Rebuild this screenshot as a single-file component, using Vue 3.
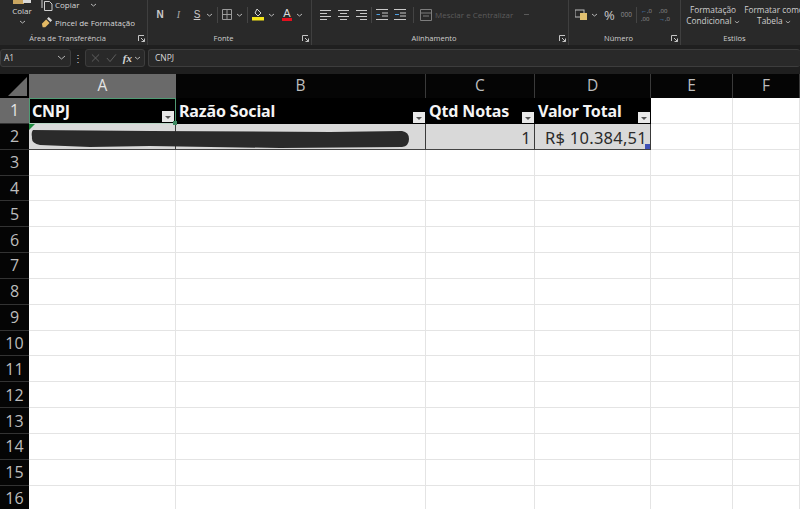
<template>
  <div class="excel">
    <div class="ribbon">
      <section class="group clip">
        <div class="tools">
          <div class="paste">
            <svg class="paste-icon" width="18" height="4" viewBox="0 0 18 4"><rect width="11" height="4" fill="#c9a560"/><rect x="10" width="8" height="3" fill="#d9d9d9"/></svg>
            <span>Colar</span>
            <svg class="chev" width="7" height="4" viewBox="0 0 7 4"><path d="M1 1l2.500 2L6 1" /></svg>
          </div>
          <div class="clip-actions">
            <div class="clip-row">
              <svg width="12" height="13" viewBox="0 0 12 13" fill="none" stroke="#cfcfcf"><path d="M3.500 3.500h5l2.500 2.500v6.500h-7.500zM1 10V.5h6"/></svg>
              <span>Copiar</span>
              <svg class="chev copy-chev" width="7" height="4" viewBox="0 0 7 4"><path d="M1 1l2.500 2L6 1" /></svg>
            </div>
            <div class="clip-row">
              <svg width="12" height="13" viewBox="0 0 14 13"><path d="M1 8l5-5 4 4-5 5H2z" fill="#e3b964"/><path d="M7 2l2-2 4 4-2 2z" fill="#d8d8d8"/></svg>
              <span>Pincel de Formatação</span>
            </div>
          </div>
        </div>
        <div class="label">Área de Transferência<svg class="launch" width="7" height="7" viewBox="0 0 7 7" fill="none" stroke="#c4c4c4"><path d="M.5 6V.5H6M3 3l3.500 3.500M6.500 3.500v3h-3"/></svg></div>
      </section>

      <section class="group font">
        <div class="tools font-tools">
          <b class="btn-n">N</b>
          <i class="btn-i">I</i>
          <u class="btn-s">S</u>
          <svg class="chev" width="7" height="4" viewBox="0 0 7 4"><path d="M1 1l2.500 2L6 1" /></svg>
          <span class="vsep"></span>
          <svg width="10" height="11" viewBox="0 0 10 11" fill="none" stroke="#9a9a9a"><path d="M.5.5h9v10h-9zM5 .5v10M.5 5.500h9"/></svg>
          <svg class="chev" width="7" height="4" viewBox="0 0 7 4"><path d="M1 1l2.500 2L6 1" /></svg>
          <span class="vsep"></span>
          <svg width="12" height="13" viewBox="0 0 12 13"><path d="M5 1l4 4-3 3-3-3z" fill="none" stroke="#d0d0d0"/><rect y="9" width="12" height="3.500" fill="#f5e61a"/></svg>
          <svg class="chev" width="7" height="4" viewBox="0 0 7 4"><path d="M1 1l2.500 2L6 1" /></svg>
          <span class="color-a">A</span>
          <svg class="chev" width="7" height="4" viewBox="0 0 7 4"><path d="M1 1l2.500 2L6 1" /></svg>
        </div>
        <div class="label">Fonte<svg class="launch" width="7" height="7" viewBox="0 0 7 7" fill="none" stroke="#c4c4c4"><path d="M.5 6V.5H6M3 3l3.500 3.500M6.500 3.500v3h-3"/></svg></div>
      </section>

      <section class="group align">
        <div class="tools align-tools">
          <svg v-for="p in alignIcons" :key="p" class="al" width="11" height="11" viewBox="0 0 11 11" fill="none" stroke="#c8c8c8"><path :d="p"/></svg>
          <span class="vsep"></span>
          <svg class="ind" width="12" height="11" viewBox="0 0 12 11" fill="none" stroke="#c8c8c8"><path d="M0 .5h12M6 4h6M6 7h6M0 10.500h12"/><path d="M4 5.500H.5" stroke="#4f9fe0"/></svg>
          <svg class="ind" width="12" height="11" viewBox="0 0 12 11" fill="none" stroke="#c8c8c8"><path d="M0 .5h12M6 4h6M6 7h6M0 10.500h12"/><path d="M1 5.500h4" stroke="#4f9fe0"/></svg>
          <span class="vsep"></span>
          <svg class="merge-icon" width="12" height="12" viewBox="0 0 12 12" fill="none" stroke="#7d7d7d"><path d="M.5.5h11v11H.5zM.5 4h11M3 7h6"/></svg>
          <span class="merge">Mesclar e Centralizar</span>
          <span class="merge-chev"></span>
        </div>
        <div class="label">Alinhamento<svg class="launch" width="7" height="7" viewBox="0 0 7 7" fill="none" stroke="#c4c4c4"><path d="M.5 6V.5H6M3 3l3.500 3.500M6.500 3.500v3h-3"/></svg></div>
      </section>

      <section class="group number">
        <div class="tools num-tools">
          <svg width="12" height="11" viewBox="0 0 12 11"><rect width="9" height="7" y="1" fill="none" stroke="#bdbdbd"/><rect x="5" y="4" width="7" height="7" fill="#e0c070"/></svg>
          <svg class="chev" width="7" height="4" viewBox="0 0 7 4"><path d="M1 1l2.500 2L6 1" /></svg>
          <span class="percent">%</span>
          <span class="thousand">000</span>
          <span class="vsep"></span>
          <div class="dec"><span><em>←</em>,0</span><span>,00</span></div>
          <div class="dec"><span>,00</span><span><em>→</em>,0</span></div>
        </div>
        <div class="label">Número<svg class="launch" width="7" height="7" viewBox="0 0 7 7" fill="none" stroke="#c4c4c4"><path d="M.5 6V.5H6M3 3l3.500 3.500M6.500 3.500v3h-3"/></svg></div>
      </section>

      <section class="group styles">
        <div class="tools style-tools">
          <div class="style-btn">
            <span>Formatação</span>
            <span>Condicional <svg class="chev" width="6" height="4" viewBox="0 0 7 4"><path d="M1 1l2.500 2L6 1" /></svg></span>
          </div>
          <div class="style-btn">
            <svg class="style-dot" width="8" height="2" viewBox="0 0 8 2"><rect width="8" height="2" fill="#3d8fd6"/></svg>
            <span>Formatar como</span>
            <span>Tabela <svg class="chev" width="6" height="4" viewBox="0 0 7 4"><path d="M1 1l2.500 2L6 1" /></svg></span>
          </div>
        </div>
        <div class="label">Estilos</div>
      </section>
    </div>

    <div class="formula">
      <div class="namebox">A1<svg class="chev big" width="9" height="5" viewBox="0 0 9 5"><path d="M1 1l3.500 3L8 1" /></svg></div>
      <span class="dots">⋮</span>
      <div class="fx-box">
        <svg width="10" height="10" viewBox="0 0 10 10" fill="none" stroke="#5f5f5f" stroke-width="1.100"><path d="M1 1l8 8M9 1L1 9"/></svg>
        <svg width="12" height="10" viewBox="0 0 12 10" fill="none" stroke="#5f5f5f" stroke-width="1.100"><path d="M1 5l3.500 4L11 1"/></svg>
        <span class="fx">fx</span>
        <svg class="chev" width="7" height="4" viewBox="0 0 7 4"><path d="M1 1l2.500 2L6 1" /></svg>
      </div>
      <div class="input">CNPJ</div>
    </div>

    <div class="sheet">
      <div class="corner"><span></span></div>
      <div v-for="c in columns" :key="c" class="col-head" :class="{ active: c === 'A' }">{{ c }}</div>

      <template v-for="r in rows" :key="r">
        <div class="row-head" :class="{ active: r === 1 }">{{ r }}</div>
        <template v-if="r === 1">
          <div v-for="(t, i) in titles" :key="t" class="cell title" :class="{ selected: i === 0 }">
            {{ t }}<span class="filter"></span>
          </div>
          <div class="cell"></div>
          <div class="cell"></div>
        </template>
        <template v-else-if="r === 2">
          <div class="cell data first">
            <svg class="scribble" width="380" height="18" viewBox="0 0 380 18"><path d="M3 0 L120 1 L300 2 L372 1 Q379 2 379 9 Q379 16 372 17 L250 18 L120 16 L60 17 L10 15 Q1 13 2 7 Q1 2 3 0z" fill="#2a2a2a"/></svg>
          </div>
          <div class="cell data"></div>
          <div class="cell data num">1</div>
          <div class="cell data num last">R$ 10.384,51</div>
          <div class="cell"></div>
          <div class="cell"></div>
        </template>
        <template v-else>
          <div v-for="c in columns" :key="c" class="cell"></div>
        </template>
      </template>
    </div>
  </div>
</template>

<script setup>
const columns = ['A', 'B', 'C', 'D', 'E', 'F']
const titles = ['CNPJ', 'Razão Social', 'Qtd Notas', 'Valor Total']
const rows = Array.from({ length: 16 }, (_, i) => i + 1)
const alignIcons = [
  'M0 1.500h11M0 4.500h7M0 7.500h11M0 10.500h7',
  'M0 1.500h11M2 4.500h7M0 7.500h11M2 10.500h7',
  'M0 1.500h11M4 4.500h7M0 7.500h11M4 10.500h7'
]
</script>

<style>
html,
body {
  margin: 0;
  background: #fff;
}
</style>

<style scoped>
.excel {
  width: 800px;
  height: 509px;
  overflow: hidden;
  font-family: "Open Sans", "Liberation Sans", sans-serif;
  background: #1f1f1f;
}

.ribbon {
  display: flex;
  height: 45px;
  background: #292929;
  color: #d8d8d8;
  font-size: 8px;
  overflow: hidden;
}

.group {
  position: relative;
  display: flex;
  flex-direction: column;
  flex: none;
  border-right: 1px solid #3f3f3f;
  box-sizing: border-box;
}

.clip { width: 148px; }
.font { width: 164px; }
.align { width: 257px; }
.number { width: 112px; }
.styles { width: 119px; border-right: 0; }

.tools {
  display: flex;
  align-items: center;
  height: 32px;
  padding-bottom: 3px;
  box-sizing: border-box;
  flex: none;
}

.label {
  position: relative;
  padding-right: 12px;
  text-align: center;
  font-size: 7.5px;
  line-height: 12px;
  color: #cfcfcf;
}

.launch {
  position: absolute;
  right: 2px;
  top: 3px;
}

.chev {
  flex: none;
  fill: none;
  stroke: #b5b5b5;
}

.paste {
  display: flex;
  flex-direction: column;
  align-items: center;
  flex: none;
  align-self: flex-start;
  width: 40px;
  margin-left: 2px;
  font-size: 8px;
  line-height: 14px;
}

.paste-icon {
  display: block;
}

.paste .chev {
  margin-top: 2px;
}

.clip-actions {
  display: flex;
  flex-direction: column;
  align-self: flex-start;
  gap: 5px;
  margin: -2px 0 0 -1px;
}

.clip-row {
  display: flex;
  align-items: center;
  gap: 2px;
  height: 13px;
  white-space: nowrap;
}

.copy-chev {
  margin-left: 9px;
}

.font-tools {
  padding-left: 7px;
  gap: 4px;
}

.btn-n,
.btn-i,
.btn-s {
  width: 10px;
  font-size: 10px;
  text-align: center;
  color: #c9c9c9;
  font-family: "Liberation Sans", sans-serif;
}

.btn-n,
.btn-i {
  margin-right: 4.500px;
}

.btn-i {
  font-family: "Liberation Serif", serif;
  color: #a8a8a8;
}

.vsep {
  width: 1px;
  height: 16px;
  background: #444;
  flex: none;
}

.color-a {
  width: 10px;
  margin-left: 3px;
  text-align: center;
  font-size: 11px;
  line-height: 10px;
  color: #d8d8d8;
  border-bottom: 3px solid #e3101e;
  font-family: "Liberation Sans", sans-serif;
}

.align-tools {
  padding-left: 8px;
}

.al {
  margin-right: 7px;
}

.al:nth-child(3) {
  margin-right: 4px;
}

.ind {
  margin-left: 4px;
}

.ind + .ind {
  margin-left: 6px;
}

.ind + .vsep {
  margin-left: 7px;
}

.merge-icon {
  margin-left: 6px;
}

.merge {
  margin-left: 3px;
  color: #5c5c5c;
  font-size: 8px;
  white-space: nowrap;
}

.merge-chev {
  width: 5px;
  height: 1px;
  background: #5a5a5a;
  margin-left: 11px;
}

.num-tools {
  padding-left: 6px;
  gap: 4px;
}

.percent {
  margin-left: 2px;
  font-size: 13px;
  color: #c8c8c8;
  line-height: 16px;
}

.thousand {
  margin-left: 2px;
  font-size: 6.500px;
  color: #8f8f8f;
}

.dec {
  display: flex;
  flex-direction: column;
  font-size: 6px;
  line-height: 8px;
  color: #9a9a9a;
  width: 14px;
  white-space: nowrap;
}

.dec em {
  font-style: normal;
  color: #4f9fe0;
}

.style-tools {
  gap: 2px;
  padding-left: 4px;
}

.style-btn {
  position: relative;
  display: flex;
  flex-direction: column;
  align-items: center;
  flex: none;
  width: 56px;
  font-size: 8.300px;
  line-height: 11px;
  white-space: nowrap;
  color: #cfcfcf;
}

.style-btn + .style-btn {
  width: 62px;
}

.style-dot {
  position: absolute;
  top: -7px;
  left: 22px;
}

.formula {
  display: flex;
  align-items: center;
  height: 29px;
  background: #1f1f1f;
  box-sizing: border-box;
  padding: 2px 0 6px;
  font-size: 8.500px;
  color: #d6d6d6;
}

.namebox,
.fx-box,
.input {
  display: flex;
  align-items: center;
  height: 18px;
  box-sizing: border-box;
  background: #292929;
  border: 1px solid #3d3d3d;
  border-radius: 3px;
}

.namebox {
  width: 71px;
  padding: 0 4px 0 3px;
  justify-content: space-between;
}

.dots {
  width: 14px;
  text-align: center;
  font-size: 10px;
  flex: none;
}

.fx-box {
  width: 60px;
  gap: 6px;
  padding: 0 3px 0 5px;
  flex: none;
}

.fx {
  font-family: "Liberation Serif", serif;
  font-style: italic;
  font-weight: 700;
  font-size: 11px;
  margin-right: -4px;
}

.input {
  flex: 1;
  margin-left: 3px;
  padding-left: 6px;
  border-right: 0;
}

.sheet {
  display: grid;
  grid-template-columns: 29px 147px 250px 109px 116px 82px 67px;
  grid-template-rows: 24px repeat(16, 25.850px);
  background: #fff;
}

.corner {
  background: #000;
  display: flex;
  align-items: flex-end;
  justify-content: flex-end;
  padding: 0 2px 2px 0;
}

.corner span {
  width: 0;
  height: 0;
  border-style: solid;
  border-width: 0 0 19px 19px;
  border-color: transparent transparent #6b6b6b transparent;
}

.col-head {
  background: #050505;
  color: #bdbdbd;
  border-right: 1px solid #3a3a3a;
  box-sizing: border-box;
  display: flex;
  align-items: center;
  justify-content: center;
  font-size: 15.500px;
  padding-bottom: 2px;
}

.col-head.active {
  background: #6a6a6a;
  color: #e4e4e4;
  border-right: 0;
}

.row-head {
  background: #050505;
  color: #bdbdbd;
  border-bottom: 1px solid #333;
  box-sizing: border-box;
  display: flex;
  align-items: center;
  justify-content: center;
  font-size: 16px;
}

.row-head.active {
  background: #6a6a6a;
  color: #e4e4e4;
}

.cell {
  position: relative;
  border-right: 1px solid #e4e4e4;
  border-bottom: 1px solid #e4e4e4;
  box-sizing: border-box;
  min-width: 0;
}

.title {
  background: #000;
  color: #f4f4f4;
  font-family: "Noto Sans", "Open Sans", sans-serif;
  font-weight: 700;
  font-size: 16px;
  letter-spacing: -0.15px;
  line-height: 27px;
  padding-left: 3px;
  white-space: nowrap;
  border: 0;
}

.title.selected {
  border: 1px solid #4f9a73;
  border-bottom-color: #b9d6c6;
  padding-left: 2px;
  line-height: 25px;
}

.title.selected::after {
  content: "";
  position: absolute;
  right: -2px;
  bottom: -2px;
  width: 4px;
  height: 4px;
  background: #3f8a63;
  z-index: 2;
}

.filter {
  position: absolute;
  right: 1px;
  bottom: 1px;
  width: 12px;
  height: 11px;
  background: #e9e9e9;
}

.filter::after {
  content: "";
  position: absolute;
  left: 3px;
  top: 5px;
  border-style: solid;
  border-width: 3px 3px 0;
  border-color: #555 transparent transparent;
}

.data {
  background: #d9d9d9;
  border-right: 1px solid #3a3a3a;
  border-bottom: 1px solid #444;
}

.data.first::before {
  content: "";
  position: absolute;
  left: 0;
  top: 0;
  border-style: solid;
  border-width: 6px 6px 0 0;
  border-color: #1e8a3e transparent transparent transparent;
}

.scribble {
  position: absolute;
  left: 1px;
  top: 6px;
  z-index: 1;
}

.num {
  color: #2b2b2b;
  font-family: "Noto Sans", "Open Sans", sans-serif;
  font-size: 16.500px;
  letter-spacing: 0.25px;
  line-height: 27px;
  text-align: right;
  padding-right: 3px;
}

.last::after {
  content: "";
  position: absolute;
  right: 0;
  bottom: 0;
  width: 5px;
  height: 5px;
  background: #3f50b5;
}
</style>
